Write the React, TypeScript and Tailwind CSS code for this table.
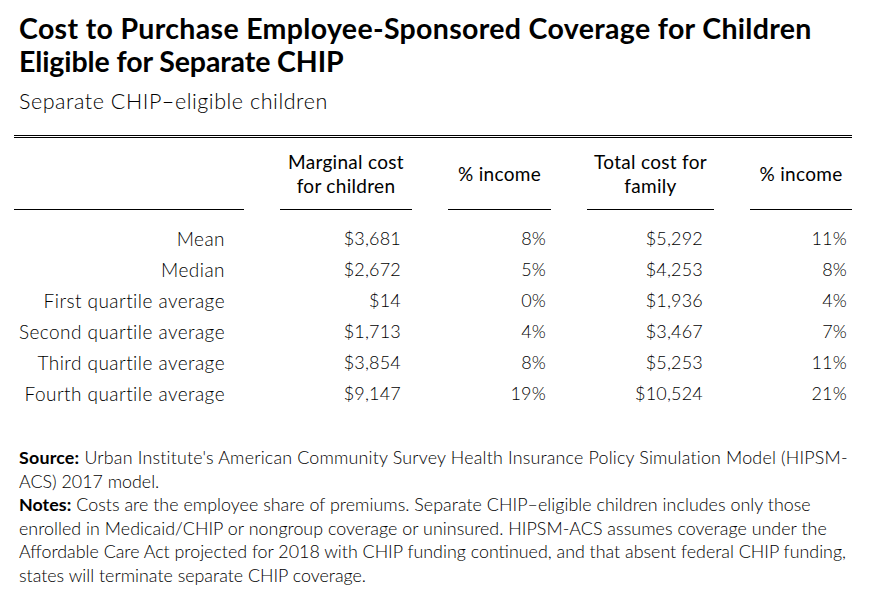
import React from "react";

const rows = [
  ["Mean", "$3,681", "8%", "$5,292", "11%"],
  ["Median", "$2,672", "5%", "$4,253", "8%"],
  ["First quartile average", "$14", "0%", "$1,936", "4%"],
  ["Second quartile average", "$1,713", "4%", "$3,467", "7%"],
  ["Third quartile average", "$3,854", "8%", "$5,253", "11%"],
  ["Fourth quartile average", "$9,147", "19%", "$10,524", "21%"],
];

export default function App() {
  return (
    <div className="w-[882px] h-[601px] bg-white text-black font-['Lato','Liberation_Sans',sans-serif] overflow-hidden">
      <div className="pl-[19px] pt-[12px]">
        <h1 className="text-[28.5px] leading-[33px] font-bold whitespace-nowrap">
          <div className="tracking-[0.33px]">Cost to Purchase Employee-Sponsored Coverage for Children</div>
          <div className="tracking-[-0.1px]">Eligible for Separate CHIP</div>
        </h1>
        <div className="text-[21.5px] leading-[28px] font-light mt-[9px] tracking-[0.55px]">Separate CHIP–eligible children</div>
      </div>
      <div className="ml-[14px] w-[838px] mt-[20px]">
        <div className="h-[3px] border-y border-black"></div>
        <div className="grid grid-cols-[230px_132px_103px_127px_102px] gap-x-[36px] text-[19px] leading-[24px] tracking-[0.3px]">
          <div className="h-[72px] border-b border-black"></div>
          <div className="h-[72px] border-b border-black flex items-center justify-center text-center">
            Marginal cost
            <br />
            for children
          </div>
          <div className="h-[72px] border-b border-black flex items-center justify-center text-center">
            % income
          </div>
          <div className="h-[72px] border-b border-black flex items-center justify-center text-center">
            Total cost for
            <br />
            family
          </div>
          <div className="h-[72px] border-b border-black flex items-center justify-center text-center">
            % income
          </div>
        </div>
        <div className="grid grid-cols-[230px_132px_103px_127px_102px] gap-x-[36px] pt-[13px] leading-[31px] font-light">
          {rows.map((r) => (
            <React.Fragment key={r[0]}>
              <div className="text-right pr-[19px] text-[19px] tracking-[0.45px] whitespace-nowrap">{r[0]}</div>
              <div className="text-right pr-[11px] text-[18px] tracking-[0.2px]">{r[1]}</div>
              <div className="text-right pr-[5px] text-[18px] tracking-[0.2px]">{r[2]}</div>
              <div className="text-right pr-[11px] text-[18px] tracking-[0.2px]">{r[3]}</div>
              <div className="text-right pr-[5px] text-[18px] tracking-[0.2px]">{r[4]}</div>
            </React.Fragment>
          ))}
        </div>
      </div>
      <div className="pl-[19px] mt-[37px] text-[17.85px] leading-[23.5px] font-light">
        <div className="whitespace-nowrap tracking-[0.19px]">
          <span className="font-bold">Source:</span> Urban Institute's American Community Survey Health Insurance Policy Simulation Model (HIPSM-
        </div>
        <div className="whitespace-nowrap">ACS) 2017 model.</div>
        <div className="whitespace-nowrap tracking-[0.04px]">
          <span className="font-bold">Notes:</span> Costs are the employee share of premiums. Separate CHIP–eligible children includes only those
        </div>
        <div className="whitespace-nowrap tracking-[0.04px]">enrolled in Medicaid/CHIP or nongroup coverage or uninsured. HIPSM-ACS assumes coverage under the</div>
        <div className="whitespace-nowrap">Affordable Care Act projected for 2018 with CHIP funding continued, and that absent federal CHIP funding,</div>
        <div className="whitespace-nowrap">states will terminate separate CHIP coverage.</div>
      </div>
    </div>
  );
}
